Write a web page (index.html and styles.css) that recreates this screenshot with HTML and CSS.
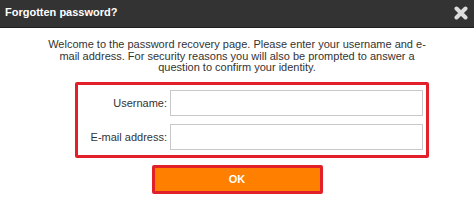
FILE: index.html
```html
<!DOCTYPE html>
<html>
<head>
<meta charset="utf-8">
<link rel="stylesheet" href="styles.css">
</head>
<body>
<div class="dialog">
  <div class="header">
    <span class="title">Forgotten password?</span>
    <svg class="close" width="14" height="14" viewBox="0 0 14 14"><path d="M2.5 2.5 L11.5 11.5 M11.5 2.5 L2.5 11.5" stroke="#dcdcdc" stroke-width="4" stroke-linecap="round"/></svg>
  </div>
  <div class="content">
    <p class="intro">Welcome to the password recovery page. Please enter your username and e-mail address. For security reasons you will also be prompted to answer a question to confirm your identity.</p>
    <div class="form-box">
      <label class="label">Username:</label>
      <input class="field" type="text">
      <label class="label">E-mail address:</label>
      <input class="field" type="text">
    </div>
    <button class="ok">OK</button>
  </div>
</div>
</body>
</html>
```
FILE: styles.css
```css
html, body { margin: 0; padding: 0; background: #fff; }
body { font-family: "Liberation Sans", Arial, sans-serif; }
.dialog { width: 474px; }
.header {
  box-sizing: border-box;
  height: 28px;
  background: #333333;
  border-bottom: 1px solid #1f1f1f;
  display: flex;
  align-items: center;
  justify-content: space-between;
  padding: 0 6px 3px 5px;
}
.title { color: #fff; font-weight: bold; font-size: 11px; }
.close { display: block; margin-top: 1px; }
.content { display: flex; flex-direction: column; align-items: center; padding-top: 11px; }
.intro {
  margin: 0;
  width: 386px;
  text-align: center;
  font-size: 11px;
  line-height: 11.5px;
  color: #333;
}
.form-box {
  box-sizing: border-box;
  margin-top: 8px;
  margin-left: 30px;
  width: 354px;
  border: 3px solid #e3202a;
  border-radius: 2px;
  display: grid;
  grid-template-columns: auto 253px;
  justify-content: end;
  align-items: center;
  column-gap: 3px;
  row-gap: 8px;
  padding: 5px 3px 5px 0;
}
.label { font-size: 11px; color: #333; text-align: right; }
.field {
  box-sizing: border-box;
  width: 253px;
  height: 26px;
  margin: 0;
  border: 1px solid #c8c8c8;
  background: #fff;
}
.ok {
  box-sizing: border-box;
  margin-top: 7px;
  width: 171px;
  height: 29px;
  background: #ff7f00;
  border: 3px solid #e1212a;
  border-radius: 2px;
  color: #fff;
  font-family: "Liberation Sans", Arial, sans-serif;
  font-weight: bold;
  font-size: 11px;
  padding: 0;
}
```
